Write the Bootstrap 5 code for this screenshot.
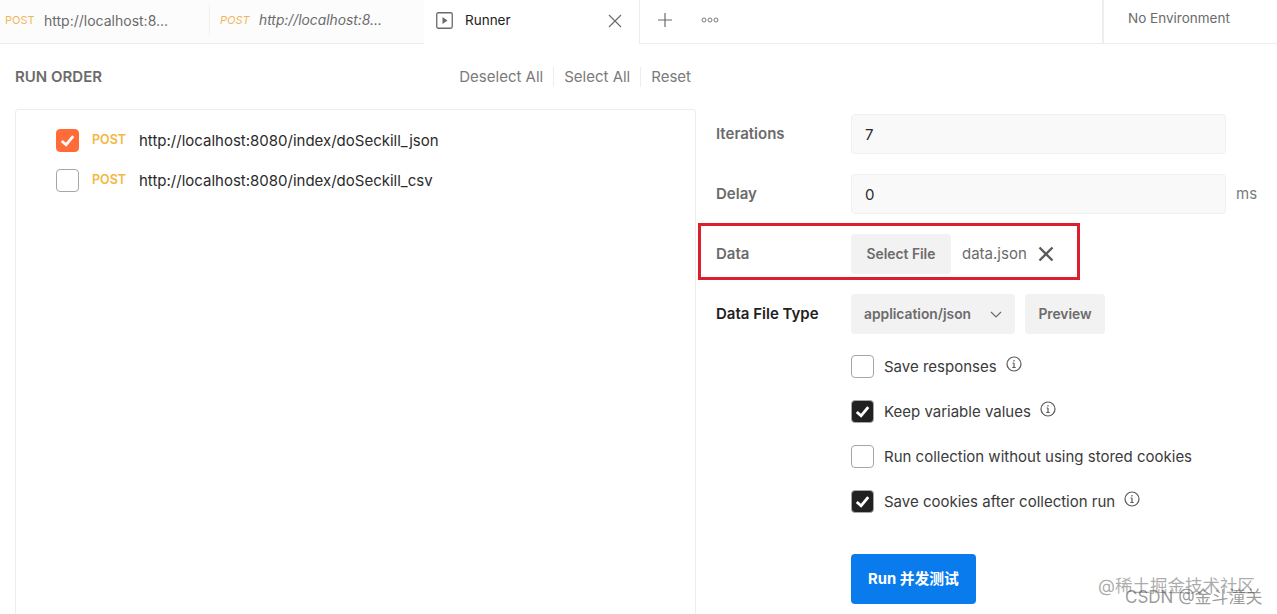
<!DOCTYPE html>
<html lang="en">
<head>
  <meta charset="UTF-8">
  <meta name="viewport" content="width=device-width, initial-scale=1.0">
  <title>Runner</title>
  <link rel="stylesheet" href="https://cdn.jsdelivr.net/npm/bootstrap@5.3.0/dist/css/bootstrap.min.css">
  <style>
    html, body { height: 614px; overflow: hidden; }
    body { font-family: Inter, "Noto Sans CJK SC", sans-serif; font-size: 15px; color: #212121; background: #fff; position: relative; }
    .top-bar { height: 44px; }
    .req-tab { width: 210px; height: 44px; border-bottom: 1px solid #ededed; background: #fcfcfc; padding-bottom: 3px; color: #6b6b6b; font-size: 14px; }
    .req-tab + .req-tab { width: 214px; }
    .req-tab .tab-inner { height: 30px; border-right: 1px solid #f0f0f0; }
    .verb-small { font-size: 11px; color: #f0b75a; width: 44px; padding-left: 5px; }
    .req-tab + .req-tab .verb-small { width: 49px; padding-left: 10px; }
    .italic-url { font-size: 13.8px; }
    .runner-tab { width: 216px; height: 44px; border-right: 1px solid #ededed; padding: 0 17px 3px 12px; font-size: 13.5px; }
    .runner-name { margin-left: 11px; }
    .tab-rest { flex: 1; height: 44px; border-bottom: 1px solid #ededed; padding-bottom: 4px; }
    .plus-ico { margin-left: 17px; }
    .more-ico { margin-left: 28px; }
    .env-box { width: 175px; height: 44px; border-left: 2px solid #ededed; border-bottom: 1px solid #ededed; padding: 0 0 7px 24px; color: #6b6b6b; font-size: 13.5px; }
    .main-wrap { height: 570px; }
    .left-col { width: 696px; padding-left: 15px; }
    .order-head { height: 65px; }
    .order-title { font-size: 15px; font-weight: 600; color: #6b6b6b; padding-top: 2px; }
    .head-link { color: #7a7a7a; font-size: 15px; padding: 0 10px; line-height: 20px; }
    .head-link + .head-link { border-left: 1px solid #ededed; }
    .head-link:last-child { padding-right: 5px; }
    .order-panel { height: 520px; border: 1px solid #ededed; border-bottom: 0; border-radius: 4px 4px 0 0; padding: 10px 0 0 40px; }
    .order-row { height: 40px; }
    .verb { font-size: 12.5px; font-weight: 600; color: #f4b740; width: 47px; margin-left: 13px; }
    .req-url { color: #2b2b2b; font-size: 15px; padding-top: 2px; }
    .tick { width: 23px; height: 23px; border: 1px solid #a6a6a6; border-radius: 4px; background: #fff; }
    .tick svg { display: block; width: 100%; height: 100%; }
    .tick-orange { background: #ff6c37; border-color: #ff6c37; }
    .tick-dark { background: #212121; border-color: #a6a6a6; }
    .right-col { padding: 70px 0 0 20px; flex: 1; }
    .form-row { height: 40px; margin-bottom: 20px; position: relative; }
    .field-label { width: 135px; font-size: 15px; font-weight: 600; color: #6b6b6b; }
    .field-dark { color: #212121; }
    .field-input { width: 375px; height: 40px; background: #f9f9f9; border: 1px solid #f0f0f0; border-radius: 4px; padding: 2px 0 0 13px; color: #2b2b2b; font-size: 15px; }
    .unit { color: #7a7a7a; font-size: 15px; margin-left: 10px; }
    .grey-btn { height: 40px; background: #f2f2f2; border-radius: 4px; color: #6b6b6b; font-size: 13.8px; font-weight: 600; border: 0; padding: 0 15px; }
    .file-btn { width: 100px; padding: 0; }
    .file-name { color: #6b6b6b; font-size: 15px; margin-left: 11px; }
    .clear-ico { margin-left: 11px; }
    .select-btn { width: 164px; padding: 0 13px; margin-right: 10px; }
    .preview-btn { width: 80px; padding: 0; }
    .red-frame { position: absolute; left: -18px; top: -11px; width: 382px; height: 57px; border: 3px solid #dc1f2e; pointer-events: none; }
    .opt-list { margin-left: 135px; margin-top: -10px; }
    .opt-row { height: 45px; color: #3a3a3a; font-size: 15px; gap: 10px; }
    .opt-row .tick { margin-top: -1px; }
    .opt-text { padding-top: 2px; }
    .info-ico { width: 16px; height: 16px; margin: -5px 0 0 -1px; }
    .run-btn { width: 125px; height: 50px; margin-top: 30px; background: #097bed; color: #fff; border: 0; border-radius: 4px; font-size: 14.8px; font-weight: 700; padding: 0; }
    .wm { position: absolute; white-space: nowrap; line-height: 1; pointer-events: none; }
    .wm-one { left: 1098px; top: 577px; font-size: 17.5px; color: rgba(90,90,90,.5); }
    .wm-two { left: 1125px; top: 589px; font-size: 17px; color: rgba(70,70,70,.55); }
  </style>
</head>
<body>
  <!-- tabs -->
  <div class="top-bar d-flex">
    <div class="req-tab d-flex align-items-center">
      <div class="tab-inner d-flex align-items-center w-100">
        <span class="verb-small">POST</span><span>http://localhost:8...</span>
      </div>
    </div>
    <div class="req-tab d-flex align-items-center">
      <div class="tab-inner d-flex align-items-center w-100 border-0">
        <span class="verb-small fst-italic">POST</span><span class="fst-italic italic-url">http://localhost:8...</span>
      </div>
    </div>
    <div class="runner-tab d-flex align-items-center">
      <svg width="18" height="18" viewBox="0 0 18 18" class="flex-shrink-0"><rect x=".75" y=".75" width="15.5" height="15.5" rx="1.5" fill="none" stroke="#6b6b6b" stroke-width="1.3"/><path d="M6.500 5v7l5-3.500z" fill="#6b6b6b"/></svg>
      <span class="runner-name flex-grow-1">Runner</span>
      <svg width="14" height="14" viewBox="0 0 14 14"><path d="M1 1l12 12M13 1L1 13" stroke="#6b6b6b" stroke-width="1.2" fill="none"/></svg>
    </div>
    <div class="tab-rest d-flex align-items-center">
      <svg class="plus-ico" width="16" height="16" viewBox="0 0 16 16"><path d="M8 1v14M1 8h14" stroke="#6b6b6b" stroke-width="1.2" fill="none"/></svg>
      <svg class="more-ico" width="18" height="6" viewBox="0 0 18 6"><g fill="none" stroke="#6b6b6b" stroke-width=".9"><circle cx="3" cy="3" r="2"/><circle cx="9" cy="3" r="2"/><circle cx="15" cy="3" r="2"/></g></svg>
    </div>
    <div class="env-box d-flex align-items-center">No Environment</div>
  </div>

  <div class="main-wrap d-flex">
    <div class="left-col">
      <div class="order-head d-flex align-items-center justify-content-between">
        <span class="order-title">RUN ORDER</span>
        <div class="d-flex">
          <span class="head-link">Deselect All</span>
          <span class="head-link">Select All</span>
          <span class="head-link">Reset</span>
        </div>
      </div>
      <div class="order-panel">
        <div class="order-row d-flex align-items-center">
          <span class="tick tick-orange"><svg viewBox="0 0 22 22"><path d="M5 11.500l4.500 4 7.500-9" fill="none" stroke="#fff" stroke-width="3"/></svg></span>
          <span class="verb">POST</span>
          <span class="req-url">http://localhost:8080/index/doSeckill_json</span>
        </div>
        <div class="order-row d-flex align-items-center">
          <span class="tick"></span>
          <span class="verb">POST</span>
          <span class="req-url">http://localhost:8080/index/doSeckill_csv</span>
        </div>
      </div>
    </div>

    <div class="right-col">
      <div class="form-row d-flex align-items-center">
        <span class="field-label">Iterations</span>
        <div class="field-input d-flex align-items-center">7</div>
      </div>
      <div class="form-row d-flex align-items-center">
        <span class="field-label">Delay</span>
        <div class="field-input d-flex align-items-center">0</div>
        <span class="unit">ms</span>
      </div>
      <div class="form-row d-flex align-items-center">
        <span class="field-label">Data</span>
        <button class="btn grey-btn file-btn">Select File</button>
        <span class="file-name">data.json</span>
        <svg width="16" height="16" viewBox="0 0 16 16" class="clear-ico"><path d="M1.500 1.500l13 13M14.500 1.500l-13 13" stroke="#5a5a5a" stroke-width="2.400" fill="none"/></svg>
        <div class="red-frame"></div>
      </div>
      <div class="form-row d-flex align-items-center">
        <span class="field-label field-dark">Data File Type</span>
        <button class="btn grey-btn select-btn d-flex align-items-center justify-content-between">
          <span>application/json</span>
          <svg width="12" height="7" viewBox="0 0 12 7"><path d="M1 1l5 5 5-5" fill="none" stroke="#6b6b6b" stroke-width="1.200"/></svg>
        </button>
        <button class="btn grey-btn preview-btn">Preview</button>
      </div>
      <div class="opt-list">
        <div class="opt-row d-flex align-items-center">
          <span class="tick"></span><span class="opt-text">Save responses</span>
          <svg class="info-ico" viewBox="0 0 16 16"><circle cx="8" cy="8" r="7" fill="none" stroke="#5a5a5a" stroke-width="1.200"/><path d="M8 7v4.500M6.300 11.500h3.400M6.600 7H8M8 4v1.500" stroke="#5a5a5a" stroke-width="1.200" fill="none"/></svg>
        </div>
        <div class="opt-row d-flex align-items-center">
          <span class="tick tick-dark"><svg viewBox="0 0 22 22"><path d="M5 11.500l4.500 4 7.500-9" fill="none" stroke="#fff" stroke-width="3"/></svg></span><span class="opt-text">Keep variable values</span>
          <svg class="info-ico" viewBox="0 0 16 16"><circle cx="8" cy="8" r="7" fill="none" stroke="#5a5a5a" stroke-width="1.200"/><path d="M8 7v4.500M6.300 11.500h3.400M6.600 7H8M8 4v1.500" stroke="#5a5a5a" stroke-width="1.200" fill="none"/></svg>
        </div>
        <div class="opt-row d-flex align-items-center">
          <span class="tick"></span><span class="opt-text">Run collection without using stored cookies</span>
        </div>
        <div class="opt-row d-flex align-items-center">
          <span class="tick tick-dark"><svg viewBox="0 0 22 22"><path d="M5 11.500l4.500 4 7.500-9" fill="none" stroke="#fff" stroke-width="3"/></svg></span><span class="opt-text">Save cookies after collection run</span>
          <svg class="info-ico" viewBox="0 0 16 16"><circle cx="8" cy="8" r="7" fill="none" stroke="#5a5a5a" stroke-width="1.200"/><path d="M8 7v4.500M6.300 11.500h3.400M6.600 7H8M8 4v1.500" stroke="#5a5a5a" stroke-width="1.200" fill="none"/></svg>
        </div>
        <button class="btn run-btn">Run 并发测试</button>
      </div>
    </div>
  </div>

  <div class="wm wm-one">@稀土掘金技术社区</div>
  <div class="wm wm-two">CSDN @金斗潼关</div>

  <script src="https://cdn.jsdelivr.net/npm/bootstrap@5.3.0/dist/js/bootstrap.bundle.min.js"></script>
</body>
</html>
